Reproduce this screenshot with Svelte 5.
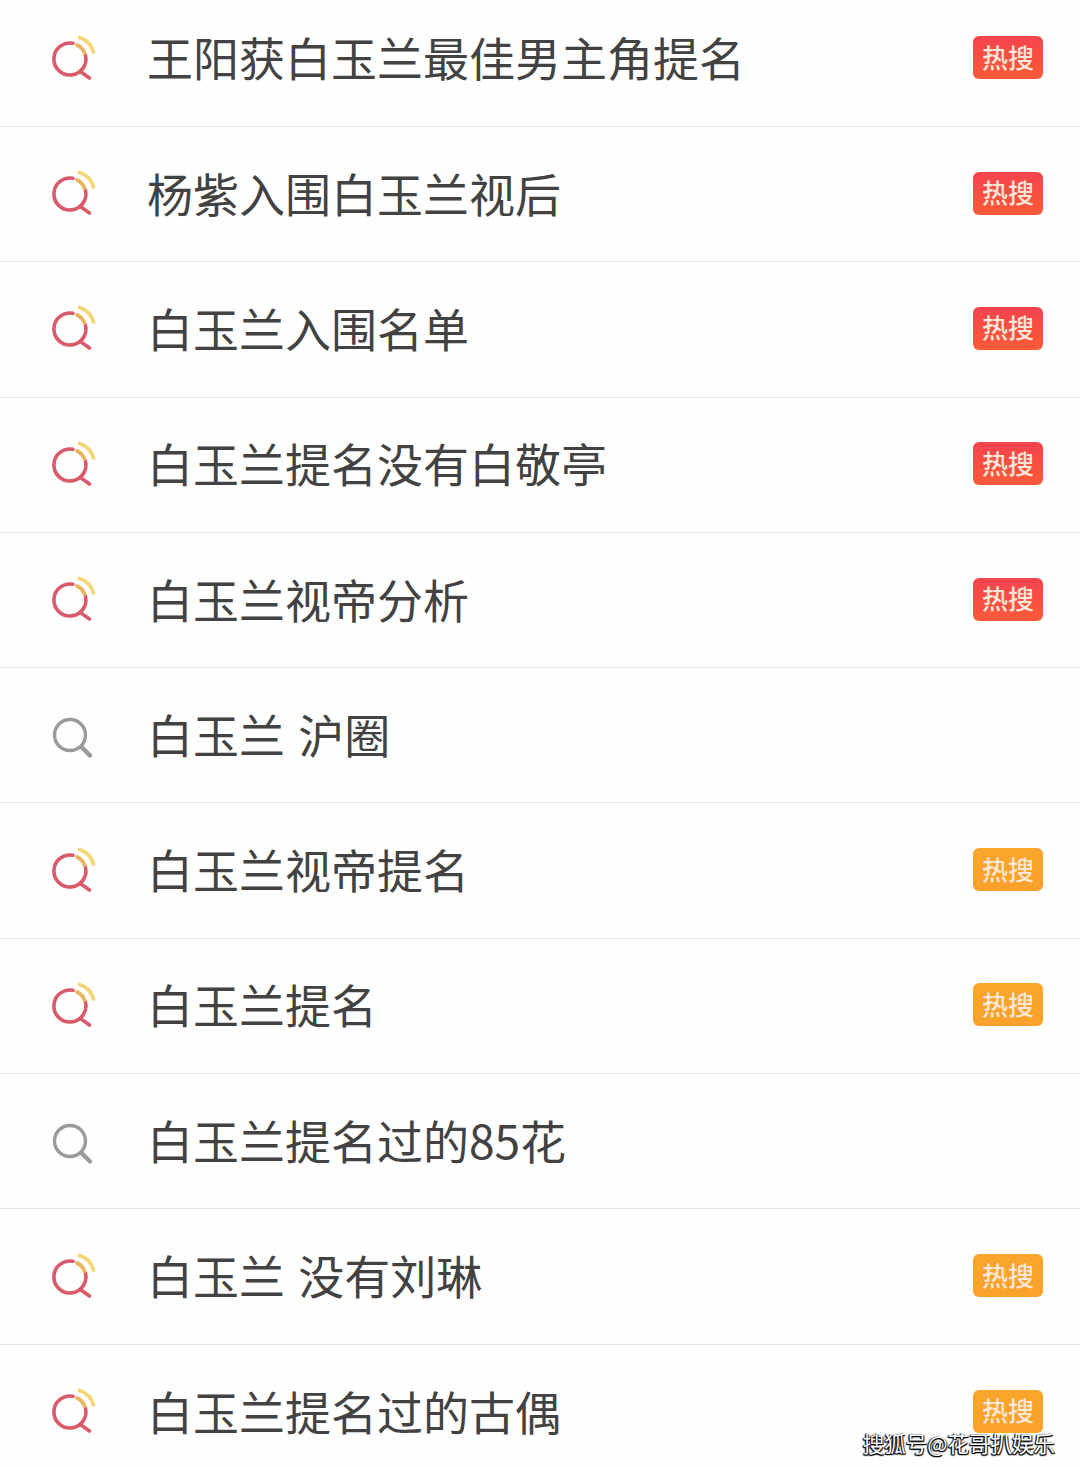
<script>
  const rows = [
    { title: '王阳获白玉兰最佳男主角提名', hot: 'red' },
    { title: '杨紫入围白玉兰视后', hot: 'red' },
    { title: '白玉兰入围名单', hot: 'red' },
    { title: '白玉兰提名没有白敬亭', hot: 'red' },
    { title: '白玉兰视帝分析', hot: 'red' },
    { title: '白玉兰 沪圈', hot: '' },
    { title: '白玉兰视帝提名', hot: 'orange' },
    { title: '白玉兰提名', hot: 'orange' },
    { title: '白玉兰提名过的85花', hot: '' },
    { title: '白玉兰 没有刘琳', hot: 'orange' },
    { title: '白玉兰提名过的古偶', hot: 'orange' }
  ];
</script>

<div class="page">
  <ul class="list">
    {#each rows as row}
      <li class="row">
        <span class="icon">
          {#if row.hot}
            <svg width="48" height="48" viewBox="0 0 48 48" fill="none" stroke-linecap="round">
              <path d="M25 8.3A16 16 0 1 0 37.4 20" stroke="#d95a6b" stroke-width="3.6" />
              <path d="M33 37L41.5 43" stroke="#d95a6b" stroke-width="3.6" />
              <path d="M31.5 2.5C38 4.5 43.5 10 45.5 17" stroke="#f3d675" stroke-width="3.8" />
              <path d="M29 10C32.5 11.5 35 14 36.5 18" stroke="#e8b45f" stroke-width="3.8" />
            </svg>
          {:else}
            <svg width="48" height="48" viewBox="0 0 48 48" fill="none" stroke="#9a9a9a" stroke-width="3.4" stroke-linecap="round">
              <circle cx="22" cy="24" r="15.5" />
              <path d="M33.5 36L42 44.5" stroke-width="4.4" />
            </svg>
          {/if}
        </span>
        <span class="title">{row.title}</span>
        {#if row.hot}
          <span class="badge {row.hot}">热搜</span>
        {/if}
      </li>
    {/each}
  </ul>
  <div class="mark">搜狐号@花哥扒娱乐</div>
</div>

<style>
  :global(body) {
    background: #fff;
  }
  .page {
    position: relative;
    height: 1467px;
    overflow: hidden;
    background: #fffefe;
    font-family: "Noto Sans CJK SC", "Liberation Sans", sans-serif;
  }
  .list {
    list-style: none;
    margin: -8.3px 0 0;
    padding: 0;
  }
  .row {
    display: flex;
    align-items: center;
    height: 135.3px;
    box-sizing: border-box;
    padding: 0 37px 0 48px;
    border-bottom: 1px solid #e4e4e4;
  }
  .row:last-child {
    border-bottom: none;
  }
  .icon {
    display: flex;
    width: 99px;
    flex: none;
  }
  .icon svg {
    overflow: visible;
  }
  .title {
    flex: 1;
    padding-bottom: 5px;
    font-size: 46px;
    line-height: 60px;
    word-spacing: 3px;
    color: #424242;
    white-space: pre;
  }
  .badge {
    display: flex;
    align-items: center;
    justify-content: center;
    box-sizing: border-box;
    width: 70px;
    height: 43px;
    margin-bottom: 2px;
    padding-bottom: 3px;
    border-radius: 6px;
    font-size: 26px;
    font-weight: 500;
    color: #fbe6d8;
  }
  .red {
    background: linear-gradient(#f4434f, #fb5a38);
  }
  .orange {
    background: linear-gradient(#fba52c, #f9a12a);
  }
  .mark {
    position: absolute;
    right: 25px;
    bottom: 12px;
    font-size: 21.5px;
    line-height: 24px;
    color: #fff;
    text-shadow: 1px 1px 1px #000, -1px 0 1px #111, 0 1px 1px #000, -1px 1px 1px #000;
  }
</style>
